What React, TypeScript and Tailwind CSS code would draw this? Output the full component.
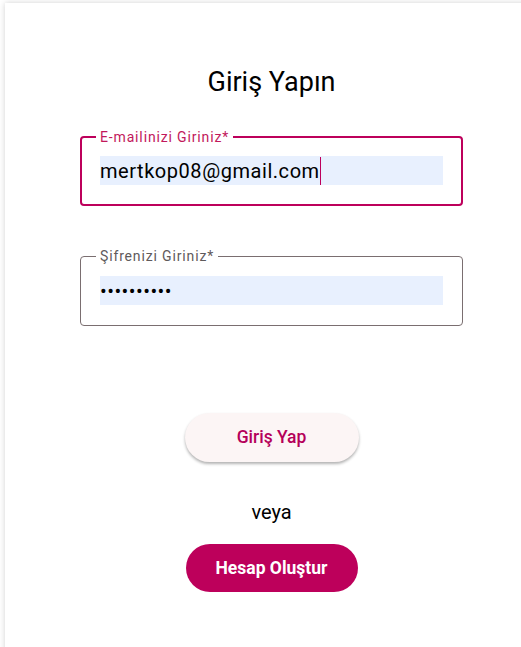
import { useState } from "react"

const ACCENT = "#bd005b"

export default function App() {
  const [email] = useState("mertkop08@gmail.com")
  const [password] = useState("••••••••••")

  return (
    <div className="w-screen h-[647px] overflow-hidden bg-white" style={{ fontFamily: "Roboto, 'Noto Sans', sans-serif" }}>
      <div className="ml-[5px] mt-[3px] w-[533px] h-[700px] bg-white shadow-[0_0_6px_rgba(0,0,0,0.18)] flex flex-col items-center">
        <h1 className="mt-[64px] text-[27px] leading-[30px] text-black">Giriş Yapın</h1>

        {/* email */}
        <fieldset className="mt-[32px] w-[383px] h-[77px] border-2 border-[#bd005b] rounded-[4px] px-0">
          <legend className="ml-[14px] px-[4px] text-[14px] leading-[16px] tracking-[0.85px] text-[#c2185b]">E-mailinizi Giriniz*</legend>
          <div className="mx-[18px] mt-[11px] h-[29px] bg-[#e8f0fe] flex items-center text-[20px] tracking-[0.55px] text-black">
            <span>{email}</span>
            <span className="w-[1.5px] h-[28px]" style={{ backgroundColor: ACCENT }} />
          </div>
        </fieldset>

        {/* password */}
        <fieldset className="mt-[42px] w-[383px] h-[78px] border border-[#7a6e70] rounded-[4px] px-0">
          <legend className="ml-[15px] px-[4px] text-[14px] leading-[16px] tracking-[0.85px] text-[#5f5a5b]">Şifrenizi Giriniz*</legend>
          <div className="mx-[19px] mt-[12px] h-[29px] bg-[#e8f0fe] flex items-center text-[20px] tracking-[0.45px] text-black">
            {password}
          </div>
        </fieldset>

        <button className="mt-[87px] w-[174px] h-[49px] rounded-full bg-[#fcf5f5] shadow-[0_2px_3px_rgba(0,0,0,0.3)] text-[17.5px] font-medium text-[#b5005a]">
          Giriş Yap
        </button>

        <p className="mt-[38px] text-[20px] leading-[24px] text-black">veya</p>

        <button className="mt-[20px] w-[172px] h-[48px] rounded-full text-[17.5px] font-bold text-white" style={{ backgroundColor: ACCENT }}>
          Hesap Oluştur
        </button>
      </div>
    </div>
  )
}
